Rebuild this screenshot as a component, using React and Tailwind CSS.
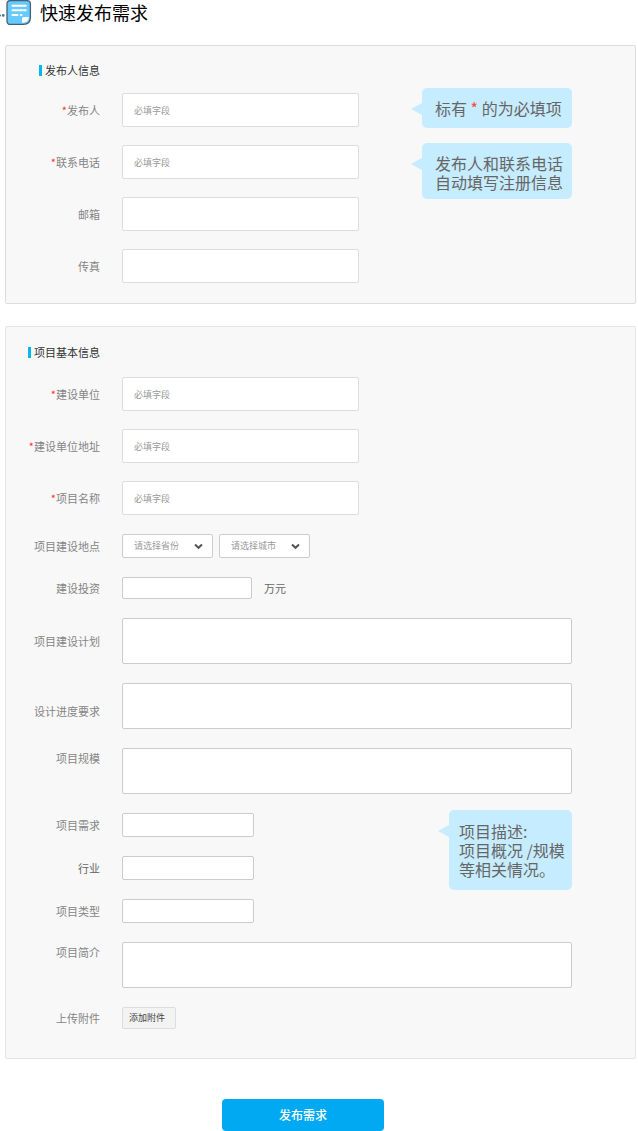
import React from "react";

const FIELD = "block rounded-[2px] border bg-white px-[11px] text-[9px] leading-4 text-gray-700 outline-none placeholder:text-[#999]";

const ALIGN = {
  center: "self-center",
  start: "self-start pt-0.5",
  end: "self-end pb-2.5",
};

function Row({ id, label, required, align = "center", tone = "text-[#858585]", children }) {
  return (
    <div className="flex gap-[22px]">
      <label htmlFor={id} className={`w-[94px] shrink-0 text-right text-[11px] leading-4 whitespace-nowrap ${tone} ${ALIGN[align]}`}>
        {required && <span className="text-[#f33]">*</span>}
        {label}
      </label>
      {children}
    </div>
  );
}

function LargeField({ id, label, required }) {
  return (
    <Row id={id} label={label} required={required}>
      <input id={id} type="text" required={required} placeholder={required ? "必填字段" : undefined} className={`${FIELD} h-[34px] w-[237px] border-[#ddd]`} />
    </Row>
  );
}

function SmallField({ id, label, tone }) {
  return (
    <Row id={id} label={label} tone={tone}>
      <input id={id} type="text" className={`${FIELD} h-6 w-[132px] border-[#ccc]`} />
    </Row>
  );
}

function AreaField({ id, label, align }) {
  return (
    <Row id={id} label={label} align={align}>
      <textarea id={id} className={`${FIELD} h-[46px] min-w-0 flex-1 resize-none border-[#ccc] py-2`} />
    </Row>
  );
}

function Picker({ id, label, placeholder, options }) {
  return (
    <div className="relative">
      <select id={id} aria-label={label} defaultValue="" className="block h-6 w-[91px] appearance-none rounded-[2px] border border-[#ccc] bg-white pl-[11px] text-[9px] leading-4 text-[#999] outline-none">
        <option value="">{placeholder}</option>
        {options.map((o) => (
          <option key={o}>{o}</option>
        ))}
      </select>
      <svg className="pointer-events-none absolute top-[9px] right-[10px] h-[7px] w-[9px]" viewBox="0 0 9 7" fill="none" stroke="#555" strokeWidth="2">
        <path d="M1 1.5 4.5 4.8 8 1.5" />
      </svg>
    </div>
  );
}

function Heading({ children }) {
  return (
    <h2 className="flex w-[94px] items-center justify-end gap-[3px] text-[11px] leading-4 font-normal whitespace-nowrap text-[#333]">
      <span className="h-[11px] w-[3px] bg-[#00b7ee]" />
      {children}
    </h2>
  );
}

function Note({ className, children }) {
  return (
    <div className={`relative flex flex-col justify-center rounded-[5px] bg-[#c6ecff] text-[16px] leading-[19px] whitespace-nowrap text-[#666] ${className}`}>
      <svg className="absolute top-[15px] right-full h-3 w-[11px]" viewBox="0 0 11 12" fill="#c6ecff">
        <path d="M11 0v12L0 6z" />
      </svg>
      {children}
    </div>
  );
}

function DocIcon() {
  return (
    <svg className="h-[26px] w-8 shrink-0" viewBox="0 0 32 26" fill="none">
      <circle cx="0.2" cy="15.5" r="0.9" fill="#667784" />
      <circle cx="3.2" cy="15.4" r="1.4" fill="#4e7a96" />
      <path d="M10.500 0.600h16.400q3.500 0 3.500 3.500v13.400q0 6.900-6.900 6.900h-13q-3.500 0-3.500-3.500v-16.800q0-3.500 3.500-3.500z" fill="#66caff" stroke="#47606f" strokeWidth="1.3" />
      <path d="M22 22.800v-3.800q0-2 2-2h4.800q0 5.800-6.800 5.800z" fill="#fff" />
      <path d="M12.500 5.700h13.200M12.500 10.300h13.200M12.500 15h5M20.700 15h.8" stroke="#fff" strokeWidth="2" strokeLinecap="round" />
    </svg>
  );
}

export default function App() {
  return (
    <main className="bg-white font-['Noto_Sans_CJK_SC',sans-serif]">
      <header className="flex h-[45px] items-start gap-2">
        <DocIcon />
        <h1 className="text-[18px] leading-6 font-normal text-black">快速发布需求</h1>
      </header>

      <form className="pr-0.5 pl-[5px]" onSubmit={(e) => e.preventDefault()}>
        <section className="flex justify-between rounded-[2px] border border-[#ddd] bg-[#f8f8f8] pt-4 pr-[63px] pb-5">
          <div>
            <Heading>发布人信息</Heading>
            <div className="mt-[15px] flex flex-col gap-[18px]">
              <LargeField id="publisher" label="发布人" required />
              <LargeField id="phone" label="联系电话" required />
              <LargeField id="email" label="邮箱" />
              <LargeField id="fax" label="传真" />
            </div>
          </div>
          <aside className="flex w-[150px] flex-col gap-[15px] pt-[26px]">
            <Note className="h-10 pl-[13px]">
              <p>
                标有 <span className="text-[#f44]">*</span> 的为必填项
              </p>
            </Note>
            <Note className="h-14 pt-1 pl-[13px]">
              <p>
                发布人和联系电话
                <br />
                自动填写注册信息
              </p>
            </Note>
          </aside>
        </section>

        <section className="mt-[22px] rounded-[2px] border border-[#e5e5e5] bg-[#f8f8f8] pt-[17px] pr-[63px] pb-[29px]">
          <Heading>项目基本信息</Heading>
          <div className="mt-[17px] flex flex-col gap-[18px]">
            <LargeField id="company" label="建设单位" required />
            <LargeField id="address" label="建设单位地址" required />
            <LargeField id="name" label="项目名称" required />
          </div>
          <div className="mt-[19px] flex flex-col gap-[19px]">
            <Row id="province" label="项目建设地点">
              <div className="flex gap-1.5">
                <Picker id="province" label="省份" placeholder="请选择省份" options={["北京", "广东", "浙江"]} />
                <Picker id="city" label="城市" placeholder="请选择城市" options={["北京", "广州", "杭州"]} />
              </div>
            </Row>
            <Row id="budget" label="建设投资">
              <div className="flex items-center gap-3">
                <input id="budget" type="text" className={`${FIELD} h-[22px] w-[130px] border-[#ccc]`} />
                <span className="text-[11px] leading-4 text-[#666]">万元</span>
              </div>
            </Row>
            <AreaField id="plan" label="项目建设计划" />
            <AreaField id="schedule" label="设计进度要求" align="end" />
            <AreaField id="scale" label="项目规模" align="start" />
            <div className="flex items-start justify-between">
              <div className="flex flex-col gap-[19px]">
                <SmallField id="demand" label="项目需求" />
                <SmallField id="industry" label="行业" tone="text-[#666]" />
                <SmallField id="type" label="项目类型" />
              </div>
              <Note className="-mt-[3px] h-20 w-[123px] pl-2.5">
                <p>
                  项目描述:
                  <br />
                  项目概况 /规模
                  <br />
                  等相关情况。
                </p>
              </Note>
            </div>
            <AreaField id="intro" label="项目简介" align="start" />
            <Row id="attachment" label="上传附件">
              <button id="attachment" type="button" className="h-[22px] rounded-[2px] border border-[#ddd] bg-[#f3f3f3] pr-2.5 pl-1.5 text-[9px] leading-4 text-[#444]">
                添加附件
              </button>
            </Row>
          </div>
        </section>

        <div className="mt-10 flex justify-center pr-[35px]">
          <button type="submit" className="h-8 w-[162px] rounded-[4px] bg-[#00a9f1] text-[12px] leading-4 font-medium text-white">
            发布需求
          </button>
        </div>
      </form>
    </main>
  );
}
